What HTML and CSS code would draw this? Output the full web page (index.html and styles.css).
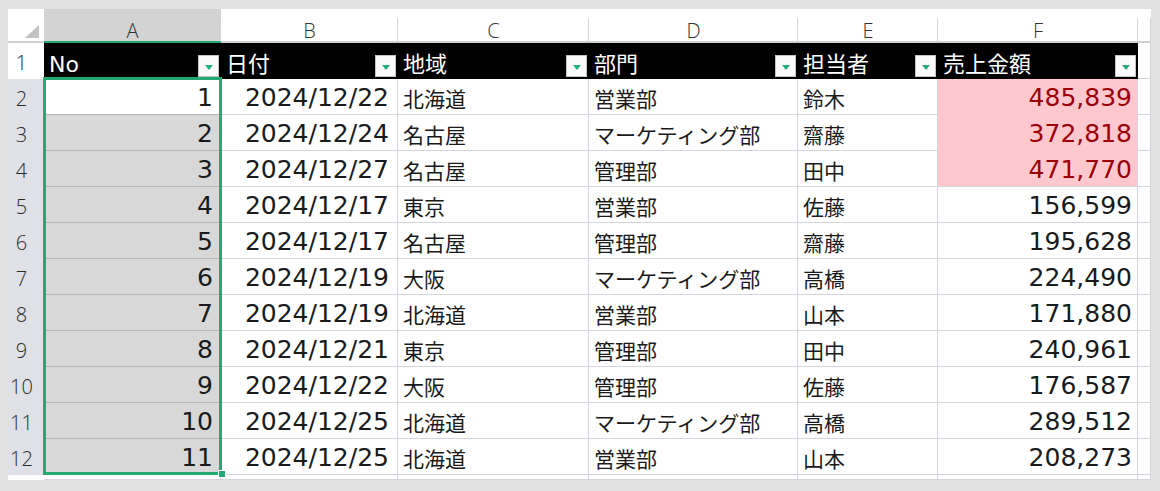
FILE: index.html
```html
<!DOCTYPE html>
<html lang="ja">
<head>
  <meta charset="UTF-8" />
  <title>売上一覧</title>
  <link rel="stylesheet" href="styles.css">
</head>
<body>

  <div class="sheet">
    <div class="grid">
      <!-- Column letters -->
      <div class="corner">
        <svg width="36" height="34" viewBox="0 0 36 34"><polygon points="17,29 31,29 31,16" fill="#c2c2c2"/></svg>
      </div>
      <div class="col-head picked">A</div>
      <div class="col-head">B</div>
      <div class="col-head">C</div>
      <div class="col-head">D</div>
      <div class="col-head">E</div>
      <div class="col-head">F</div>
      <div class="col-head"></div>

      <!-- Row 1: table header -->
      <div class="row-head">1</div>
      <div class="cell th"><span>No</span><span class="filter"></span></div>
      <div class="cell th"><span>日付</span><span class="filter"></span></div>
      <div class="cell th"><span>地域</span><span class="filter"></span></div>
      <div class="cell th"><span>部門</span><span class="filter"></span></div>
      <div class="cell th"><span>担当者</span><span class="filter"></span></div>
      <div class="cell th"><span>売上金額</span><span class="filter"></span></div>
      <div class="cell"></div>

      <div class="row-head sel">2</div>
      <div class="cell num col-a active">1</div>
      <div class="cell num col-b">2024/12/22</div>
      <div class="cell txt">北海道</div>
      <div class="cell txt">営業部</div>
      <div class="cell txt">鈴木</div>
      <div class="cell num col-f bad">485,839</div>
      <div class="cell"></div>

      <div class="row-head sel">3</div>
      <div class="cell num col-a">2</div>
      <div class="cell num col-b">2024/12/24</div>
      <div class="cell txt">名古屋</div>
      <div class="cell txt">マーケティング部</div>
      <div class="cell txt">齋藤</div>
      <div class="cell num col-f bad">372,818</div>
      <div class="cell"></div>

      <div class="row-head sel">4</div>
      <div class="cell num col-a">3</div>
      <div class="cell num col-b">2024/12/27</div>
      <div class="cell txt">名古屋</div>
      <div class="cell txt">管理部</div>
      <div class="cell txt">田中</div>
      <div class="cell num col-f bad last">471,770</div>
      <div class="cell"></div>

      <div class="row-head sel">5</div>
      <div class="cell num col-a">4</div>
      <div class="cell num col-b">2024/12/17</div>
      <div class="cell txt">東京</div>
      <div class="cell txt">営業部</div>
      <div class="cell txt">佐藤</div>
      <div class="cell num col-f">156,599</div>
      <div class="cell"></div>

      <div class="row-head sel">6</div>
      <div class="cell num col-a">5</div>
      <div class="cell num col-b">2024/12/17</div>
      <div class="cell txt">名古屋</div>
      <div class="cell txt">管理部</div>
      <div class="cell txt">齋藤</div>
      <div class="cell num col-f">195,628</div>
      <div class="cell"></div>

      <div class="row-head sel">7</div>
      <div class="cell num col-a">6</div>
      <div class="cell num col-b">2024/12/19</div>
      <div class="cell txt">大阪</div>
      <div class="cell txt">マーケティング部</div>
      <div class="cell txt">高橋</div>
      <div class="cell num col-f">224,490</div>
      <div class="cell"></div>

      <div class="row-head sel">8</div>
      <div class="cell num col-a">7</div>
      <div class="cell num col-b">2024/12/19</div>
      <div class="cell txt">北海道</div>
      <div class="cell txt">営業部</div>
      <div class="cell txt">山本</div>
      <div class="cell num col-f">171,880</div>
      <div class="cell"></div>

      <div class="row-head sel">9</div>
      <div class="cell num col-a">8</div>
      <div class="cell num col-b">2024/12/21</div>
      <div class="cell txt">東京</div>
      <div class="cell txt">管理部</div>
      <div class="cell txt">田中</div>
      <div class="cell num col-f">240,961</div>
      <div class="cell"></div>

      <div class="row-head sel">10</div>
      <div class="cell num col-a">9</div>
      <div class="cell num col-b">2024/12/22</div>
      <div class="cell txt">大阪</div>
      <div class="cell txt">管理部</div>
      <div class="cell txt">佐藤</div>
      <div class="cell num col-f">176,587</div>
      <div class="cell"></div>

      <div class="row-head sel">11</div>
      <div class="cell num col-a">10</div>
      <div class="cell num col-b">2024/12/25</div>
      <div class="cell txt">北海道</div>
      <div class="cell txt">マーケティング部</div>
      <div class="cell txt">高橋</div>
      <div class="cell num col-f">289,512</div>
      <div class="cell"></div>

      <div class="row-head sel">12</div>
      <div class="cell num col-a">11</div>
      <div class="cell num col-b">2024/12/25</div>
      <div class="cell txt">北海道</div>
      <div class="cell txt">営業部</div>
      <div class="cell txt">山本</div>
      <div class="cell num col-f">208,273</div>
      <div class="cell"></div>

      <!-- Row 13 (cut off) -->
      <div class="row-head"></div>
      <div class="cell"></div>
      <div class="cell"></div>
      <div class="cell"></div>
      <div class="cell"></div>
      <div class="cell"></div>
      <div class="cell"></div>
      <div class="cell"></div>
    </div>

    <!-- Selected range A2:A12 -->
    <div class="selection"><span class="handle"></span></div>
  </div>

</body>
</html>
```

FILE: styles.css
```css
body {
  margin: 0;
  padding: 9px 9px 11px 8px;
  background-color: #e1e1e1;
  font-family: "Noto Sans CJK JP", sans-serif;
  color: #1a1a1a;
}

/* Sheet */
.sheet {
  position: relative;
  width: 1143px;
  height: 471px;
  background-color: #fff;
  overflow: hidden;
}

.grid {
  display: grid;
  grid-template-columns: 36px 177px 177px 191px 209px 140px 200px 13px;
  grid-template-rows: 34px repeat(12, 36px) 5px;
}

/* Column letters */
.corner {
  border-bottom: 2px solid #cfcfcf;
}

.corner svg {
  display: block;
}

.col-head {
  display: flex;
  justify-content: center;
  align-items: center;
  padding-top: 10px;
  font-family: "Open Sans", sans-serif;
  font-size: 20px;
  font-weight: 300;
  color: #333;
  border-bottom: 2px solid #cfcfcf;
  background: linear-gradient(#d6d6d6, #d6d6d6) right bottom / 1px 23px no-repeat;
}

.col-head.picked {
  background-color: #d3d3d3;
  border-bottom-color: #25a872;
}

/* Row numbers */
.row-head {
  display: flex;
  align-items: center;
  justify-content: center;
  padding: 2px 9px 0 0;
  font-family: "Open Sans", sans-serif;
  font-size: 20px;
  font-weight: 300;
  color: #2a2a2a;
}

.row-head.sel {
  background-color: #dfe1e6;
}

/* Cells */
.cell {
  display: flex;
  align-items: center;
  padding-top: 2px;
  border-right: 1px solid #d5d5e0;
  border-bottom: 1px solid #d5d5e0;
  white-space: nowrap;
}

.num {
  justify-content: flex-end;
  font-family: "DejaVu Sans", "Noto Sans CJK JP", sans-serif;
  font-size: 25px;
}

.txt {
  padding-left: 5px;
  font-size: 21px;
}

.col-a {
  padding-right: 7px;
  background-color: #d8d8d8;
  border-bottom-color: #b6b6b6;
}

.col-a.active {
  background-color: #fff;
}

.col-b {
  padding-right: 8px;
}

.col-f {
  padding-right: 5px;
}

.bad {
  background-color: #ffc7ce;
  color: #9c0006;
  border-bottom-color: #ffc7ce;
}

.bad.last {
  border-bottom-color: #d5d5e0;
}

/* Table header row */
.th {
  justify-content: space-between;
  align-items: flex-end;
  padding: 0 1px 1px 5px;
  background-color: #000;
  border-color: #000;
  color: #fff;
  font-family: "DejaVu Sans", "Noto Sans CJK JP", sans-serif;
  font-size: 22px;
}

.th span:first-child {
  line-height: 28px;
  margin-bottom: -2px;
}

.filter {
  display: flex;
  align-items: center;
  justify-content: center;
  width: 21px;
  height: 22px;
  box-sizing: border-box;
  border: 1px solid #c4c4c4;
  background-color: #fafafa;
}

.filter::after {
  content: "";
  border-left: 4px solid transparent;
  border-right: 4px solid transparent;
  border-top: 5px solid #25ad7e;
  margin-top: 2px;
}

/* Selection */
.selection {
  position: absolute;
  left: 35px;
  top: 68px;
  width: 179px;
  height: 398px;
  box-sizing: border-box;
  border: 3px solid #25a872;
}

.handle {
  position: absolute;
  right: -7px;
  bottom: -6px;
  width: 8px;
  height: 8px;
  box-sizing: border-box;
  border: 1px solid #fff;
  background-color: #25a872;
}
```
